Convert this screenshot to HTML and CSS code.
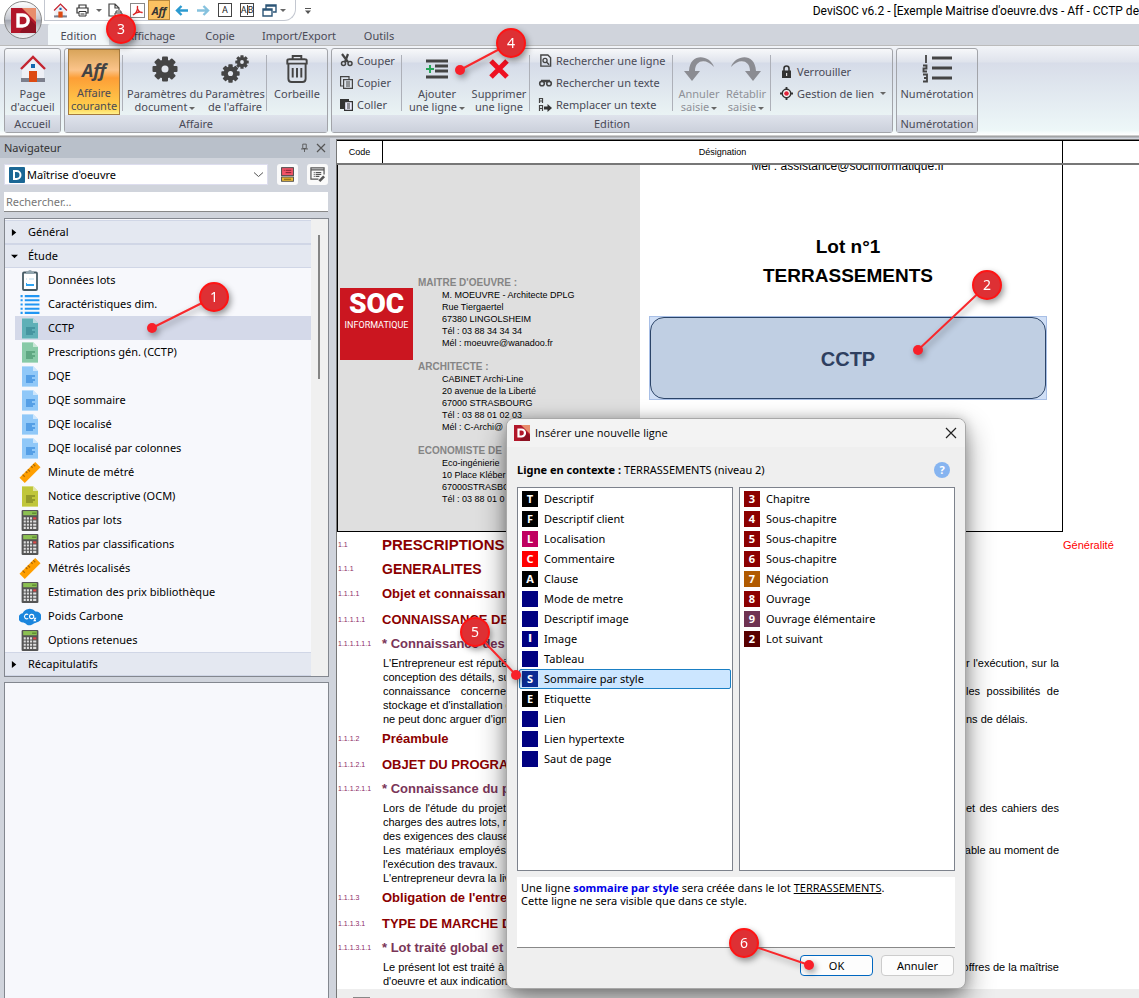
FILE: index.html
```html
<!DOCTYPE html>
<html lang="fr">
<head>
<meta charset="utf-8">
<title>DeviSOC v6.2</title>
<link rel="stylesheet" href="styles.css">
</head>
<body>
<svg class="defs" aria-hidden="true">
  <symbol id="i-house" viewBox="0 0 26 28"><path d="M4 13 13 4l9 9v11H4z" fill="#eef0f6"/><path d="M1 23h24v4H1z" fill="#7c7f8c"/><path d="M3 13v10M23 13v10" stroke="#eef0f6" stroke-width="2"/><rect x="9" y="16" width="8" height="11" fill="#dd4a12"/><rect x="11" y="9" width="4" height="4" fill="#1467b0"/><path d="M1 14 13 2l12 12" fill="none" stroke="#c42430" stroke-width="2.400"/></symbol>
  <symbol id="i-d" viewBox="0 0 16 16"><rect width="16" height="16" fill="#b2172a"/><path d="M7 0h9v9l-4-4z" fill="#e88d6c"/><path d="M6 15 12 7l4 4v5H6z" fill="#7d0f1f" opacity=".7"/><path d="M4.500 4.500h3a3.500 3.500 0 0 1 0 7h-3z" fill="none" stroke="#fff" stroke-width="2.200"/></symbol>
  <symbol id="i-gear" viewBox="-13 -13 26 26"><g fill="#454545"><circle r="9.500"/><rect x="-3" y="-12.500" width="6" height="25" rx="1"/><rect x="-3" y="-12.500" width="6" height="25" rx="1" transform="rotate(45)"/><rect x="-3" y="-12.500" width="6" height="25" rx="1" transform="rotate(90)"/><rect x="-3" y="-12.500" width="6" height="25" rx="1" transform="rotate(135)"/></g><circle r="3.500" fill="#e3e7ee"/></symbol>
  <symbol id="i-doc" viewBox="0 0 16 21"><path d="M0 0h11l5 5v16H0z" fill="currentColor"/><path d="M11 0v5h5z" fill="#fff" opacity=".55"/><path d="M0 0h11v1H0zM0 20h16v1H0z" fill="#fff" opacity=".35"/><path class="doc-mark" d="M4 9h9v2h-3v2h3v2h-2v2H4z"/></symbol>
  <symbol id="i-calc" viewBox="0 0 16 20"><rect width="16" height="20" rx="1" fill="#555"/><rect x="1.500" y="1" width="13" height="4" fill="#8cc152"/><path d="M10 3h4" stroke="#4d7a24"/><g fill="#ddd"><path d="M2 7h2v2H2zM5 7h2v2H5zM8 7h2v2H8zM2 10h2v2H2zM5 10h2v2H5zM8 10h2v2H8zM11 10h3v2h-3zM2 13h2v2H2zM5 13h2v2H5zM8 13h2v2H8zM11 13h3v2h-3zM2 16h2v2H2zM5 16h2v2H5zM8 16h2v2H8zM11 16h3v2h-3z"/></g><path d="M11 7h3v2h-3z" fill="#e04848"/></symbol>
  <symbol id="i-ruler" viewBox="0 0 20 20"><path d="M0 15 15 0l5 5L5 20z" fill="#ff9f00"/><path d="m3 12 2 2M6 9l1.500 1.500M8 7l2 2M11 4l1.500 1.500M13 2l2 2" stroke="#b06a00" stroke-width="1.200"/></symbol>
  <symbol id="i-list" viewBox="0 0 18 20"><path d="M4 2h14M4 6h14M4 10h14M4 14h14M4 18h14M0 2h2M0 6h2M0 10h2M0 14h2M0 18h2" stroke="#2196f3" stroke-width="2"/></symbol>
  <symbol id="i-clip" viewBox="0 0 16 21"><rect x="1" y="2.500" width="14" height="17.500" rx="1" fill="#fff" stroke="#455a64" stroke-width="1.800"/><path d="M4 2h2a2 2 0 0 1 4 0h2v2H4z" fill="#90a4ae"/><path d="M4 9h1M7 9h5" stroke="#b6d7e8"/><path d="M4 14h1M4 15h8" stroke="#2fa4f2" stroke-width="2"/></symbol>
  <symbol id="i-cloud" viewBox="0 0 24 19"><path d="M5 16a5 5 0 0 1-1-10A8 7 0 0 1 18 4a6 6 0 0 1 1 12c-4 1-4 3-8 3-3 0-3-2-6-3z" fill="#1b86dd"/><g fill="none" stroke="#fff" stroke-width="1.200"><path d="M10 7.500a2.500 2.500 0 1 0 0 4"/><circle cx="13.800" cy="9.500" r="2.300"/><path d="M16.500 11.500h1.500l-1.500 2.500h2"/></g></symbol>
  <symbol id="i-print" viewBox="0 0 13 13"><path d="M3 4V1h7v3M3 9H1V4h11v5h-2" fill="none" stroke="#333" stroke-width="1.200"/><path d="M3 7.500h7V12H3zM4.500 10h4" fill="#fff" stroke="#333"/></symbol>
</svg>

<div class="app">
  <header class="titlebar">
    <div class="quick">
      <button class="q" aria-label="Accueil"><svg class="s15"><use href="#i-house"/></svg></button>
      <button class="q" aria-label="Imprimer"><svg class="s13"><use href="#i-print"/></svg></button>
      <i class="tri narrow"></i>
      <button class="q" aria-label="Aperçu"><svg class="s15" viewBox="0 0 15 15"><path d="M6 13H1V1h6l4 4v2M7 1v4h4" fill="none" stroke="#444" stroke-width="1.200"/><path d="M8 10V8h5v2M8 13H7v-3h7v3" fill="#fff" stroke="#444"/></svg></button>
      <button class="q" aria-label="PDF"><svg class="s15" viewBox="0 0 15 15"><rect x=".5" y=".5" width="14" height="14" fill="#fff" stroke="#888"/><path d="M3 12c3-1 5-5 4.500-9-1 3 2 7 5 6.500-3-1-7 0-9.500 2.500" fill="none" stroke="#d22" stroke-width="1.300"/></svg></button>
      <button class="q aff-small">Aff</button>
      <button class="q" aria-label="Précédent"><svg class="s13" viewBox="0 0 13 11"><path d="M13 5.500H2M6.500 1 2 5.500 6.500 10" fill="none" stroke="#2b9ad0" stroke-width="2.400"/></svg></button>
      <button class="q" aria-label="Suivant"><svg class="s13" viewBox="0 0 13 11"><path d="M0 5.500h11M6.500 1 11 5.500 6.500 10" fill="none" stroke="#86c2de" stroke-width="2.400"/></svg></button>
      <button class="q boxed">A</button>
      <button class="q boxed split"><span>A</span><span>B</span></button>
      <button class="q" aria-label="Fenêtres"><svg class="s15" viewBox="0 0 15 13"><path d="M4 5V1h10v7h-3M4 2h10" fill="none" stroke="#2c5577" stroke-width="1.400"/><path d="M1 5h9v7H1zM1 6h9" fill="#fff" stroke="#2c5577" stroke-width="1.400"/></svg></button>
      <i class="tri last"></i>
    </div>
    <svg class="more" viewBox="0 0 6 6"><path d="M0 .5h6" stroke="#555"/><path d="M0 2.500h6L3 6z" fill="#555"/></svg>
    <h1 class="title">DeviSOC v6.2 - [Exemple Maitrise d'oeuvre.dvs - Aff - CCTP de</h1>
    <div class="orb"><svg class="orb-icon"><use href="#i-d"/></svg></div>
  </header>

  <nav class="tabs">
    <button class="tab active">Edition</button><button class="tab t2">Affichage</button><button class="tab t3">Copie</button><button class="tab t4">Import/Export</button><button class="tab t5">Outils</button>
  </nav>

  <div class="ribbon">
    <section class="group g1">
      <div class="body"><button class="big w55"><svg class="ico i26"><use href="#i-house"/></svg><span>Page<br>d'accueil</span></button></div>
      <h2>Accueil</h2>
    </section>
    <section class="group g2">
      <div class="body">
        <button class="big current"><b class="aff">Aff</b><span>Affaire<br>courante</span></button>
        <i class="sep"></i>
        <button class="big w82"><svg class="ico i26"><use href="#i-gear"/></svg><span>Paramètres du<br>document<i class="tri"></i></span></button>
        <button class="big w58"><svg class="ico i30" viewBox="0 0 28 28"><use href="#i-gear" x="0" y="9" width="19" height="19"/><use href="#i-gear" x="14" y="0" width="14" height="14"/></svg><span>Paramètres<br>de l'affaire</span></button>
        <i class="sep"></i>
        <button class="big w58"><svg class="ico i26" viewBox="0 0 24 26"><g fill="none" stroke="#444" stroke-width="1.800"><path d="M8 4V1h8v3M3 8V5q0-1 2-1h14q2 0 2 1v3zM4 8v14q0 3 3 3h10q3 0 3-3V8"/><path d="M8 12v9M12 12v9M16 12v9"/></g></svg><span>Corbeille</span></button>
      </div>
      <h2>Affaire</h2>
    </section>
    <section class="group g3">
      <div class="body">
        <div class="stack w67">
          <button class="small"><svg class="s13" viewBox="0 0 13 13"><path d="M2 0 8 8M8 0 5 8" stroke="#444" stroke-width="2.200"/><circle cx="3.500" cy="9.500" r="2" fill="none" stroke="#444" stroke-width="1.500"/><circle cx="10" cy="9.500" r="2" fill="none" stroke="#444" stroke-width="1.500"/></svg>Couper</button>
          <button class="small"><svg class="s13" viewBox="0 0 13 13"><path d="M3 10H.6V.6H9V3" fill="none" stroke="#444" stroke-width="1.200"/><path d="M3.600 3.600h8.800v8.800H3.600zM6 6h4M6 8h4M6 10h4" fill="none" stroke="#444" stroke-width="1.200"/></svg>Copier</button>
          <button class="small"><svg class="s13" viewBox="0 0 13 13"><path d="M0 1h9v3H4v7H0z" fill="#333"/><path d="M4.600 3.600h7.800v8.800H4.600zM7 6h3M7 8h3M7 10h3" fill="#eef" stroke="#333" stroke-width="1.200"/></svg>Coller</button>
        </div>
        <i class="sep"></i>
        <button class="big w68"><svg class="ico i22" viewBox="0 0 22 20"><path d="M0 2h22M9 7h13M9 12h13M0 18h22" stroke="#444" stroke-width="3"/><path d="M0 10h8M4 6v8" stroke="#27a55a" stroke-width="2"/></svg><span>Ajouter<br>une ligne<i class="tri"></i></span></button>
        <button class="big w56"><svg class="ico i20" viewBox="0 0 20 20"><path d="m2 2 16 16M18 2 2 18" stroke="#ee1122" stroke-width="5"/></svg><span>Supprimer<br>une ligne</span></button>
        <i class="sep"></i>
        <div class="stack w139">
          <button class="small"><svg class="s13" viewBox="0 0 13 14"><path d="M1.500 1H9l3 3v9H1.500z" fill="none" stroke="#444" stroke-width="1.500"/><circle cx="6" cy="7" r="2.200" fill="none" stroke="#444" stroke-width="1.400"/><path d="m7.500 8.500 3 3" stroke="#444" stroke-width="1.500"/></svg>Rechercher une ligne</button>
          <button class="small"><svg class="s13" viewBox="0 0 13 9"><circle cx="3" cy="5.500" r="2.300" fill="none" stroke="#444" stroke-width="1.600"/><circle cx="10" cy="5.500" r="2.300" fill="none" stroke="#444" stroke-width="1.600"/><path d="M2 3h9" stroke="#444" stroke-width="2.500"/></svg>Rechercher un texte</button>
          <button class="small"><svg class="s13" viewBox="0 0 13 13"><path d="M.5 5V.5h3V5M.5 3h3M.5 13V7.500h3V13M.5 10.500h3" fill="none" stroke="#444" stroke-width="1.200"/><path d="M5 10h4" stroke="#333" stroke-width="3"/><path d="M8.500 6v8l4.500-4z" fill="#333"/></svg>Remplacer un texte</button>
        </div>
        <i class="sep"></i>
        <button class="big off w50"><svg class="ico i30" viewBox="0 0 30 26"><path d="M30 11C26-1 6-4 5 15H0l8 10 8-10h-5C11 4 22 2 30 11z" fill="#8b8c92"/></svg><span>Annuler<br>saisie<i class="tri"></i></span></button>
        <button class="big off w44"><svg class="ico i30" viewBox="0 0 30 26"><path d="M0 11C4-1 24-4 25 15h5l-8 10-8-10h5C19 4 8 2 0 11z" fill="#8b8c92"/></svg><span>Rétablir<br>saisie<i class="tri"></i></span></button>
        <i class="sep"></i>
        <div class="stack two">
          <button class="small"><svg class="s13" viewBox="0 0 13 13"><path d="M4 6V3.500a2.500 2.500 0 0 1 5 0V6" fill="none" stroke="#333" stroke-width="1.600"/><rect x="2" y="5.500" width="9" height="7.500" fill="#333"/><rect x="6" y="8" width="1.200" height="3" fill="#ddd"/></svg>Verrouiller</button>
          <button class="small"><svg class="s13" viewBox="0 0 14 14"><circle cx="7" cy="7" r="4.500" fill="#fff" stroke="#333" stroke-width="1.600"/><path d="M7 0v3M7 11v3M0 7h3M11 7h3" stroke="#333" stroke-width="2"/><circle cx="7" cy="7" r="2.500" fill="#e0243a"/></svg>Gestion de lien <i class="tri"></i></button>
        </div>
      </div>
      <h2>Edition</h2>
    </section>
    <section class="group g4">
      <div class="body"><button class="big w80"><svg class="ico i30" viewBox="0 0 30 28"><path d="M10 3h20M10 13h20M10 23h20" stroke="#444" stroke-width="3"/><path d="M4 0v8M1 10.500h3.500v3H1.500v3H5M1 19.500h4v7H1M2 23h3" fill="none" stroke="#444" stroke-width="1.800"/></svg><span>Numérotation</span></button></div>
      <h2>Numérotation</h2>
    </section>
  </div>

  <main class="work">
    <aside class="side">
      <div class="side-head"><span>Navigateur</span><svg class="pin" viewBox="0 0 8 10"><path d="M2 0h4v5H2zM0 5.500h8M4 5.500V9" fill="none" stroke="#555"/></svg><svg class="cross" viewBox="0 0 8 8"><path d="m0 0 8 8M8 0 0 8" stroke="#555" stroke-width="1.200"/></svg></div>
      <div class="pick">
        <div class="combo"><svg class="s16" viewBox="0 0 16 16"><rect width="16" height="16" rx="1" fill="#1b6795"/><path d="M5 4h2.500a4 4 0 0 1 0 8H5z" fill="none" stroke="#fff" stroke-width="2"/></svg><select aria-label="Profil"><option>Maîtrise d'oeuvre</option></select><svg class="chev" viewBox="0 0 9 5"><path d="M0 .5 4.500 4.500 9 .5" fill="none" stroke="#555"/></svg></div>
        <button class="sq" aria-label="Vue"><svg class="s15" viewBox="0 0 14 16"><rect x=".7" y=".7" width="12.600" height="8.500" fill="#f25468" stroke="#444"/><path d="M3 3.500h1M5 3.500h6M5 6h6" stroke="#7d2030"/><rect x=".7" y="10.700" width="12.600" height="4.500" fill="#f8c436" stroke="#444"/><path d="M3 13h8" stroke="#665010"/></svg></button>
        <button class="sq" aria-label="Modifier"><svg class="s15" viewBox="0 0 16 16"><path d="M15 8V1H1v12h8M1 3h14M4 6h1M6 6h6M4 8h1M6 8h6M4 10h1M6 10h4" fill="none" stroke="#555" stroke-width="1.300"/><path d="m9 14 5-5 2 2-5 5z" fill="#555"/></svg></button>
      </div>
      <input class="search" type="text" placeholder="Rechercher..." aria-label="Rechercher">
      <div class="tree">
        <div class="tree-main">
          <button class="node"><svg class="arr" viewBox="0 0 8 8"><path d="M1 0 6 4 1 8z"/></svg>Général</button>
          <button class="node"><svg class="arr" viewBox="0 0 8 8"><path d="M0 2h8L4 6z"/></svg>Étude</button>
          <ul>
            <li><svg class="ic"><use href="#i-clip"/></svg>Données lots</li>
            <li><svg class="ic"><use href="#i-list"/></svg>Caractéristiques dim.</li>
            <li class="sel"><svg class="ic teal"><use href="#i-doc"/></svg>CCTP</li>
            <li><svg class="ic green"><use href="#i-doc"/></svg>Prescriptions gén. (CCTP)</li>
            <li><svg class="ic blue"><use href="#i-doc"/></svg>DQE</li>
            <li><svg class="ic blue"><use href="#i-doc"/></svg>DQE sommaire</li>
            <li><svg class="ic blue"><use href="#i-doc"/></svg>DQE localisé</li>
            <li><svg class="ic blue"><use href="#i-doc"/></svg>DQE localisé par colonnes</li>
            <li><svg class="ic"><use href="#i-ruler"/></svg>Minute de métré</li>
            <li><svg class="ic olive"><use href="#i-doc"/></svg>Notice descriptive (OCM)</li>
            <li><svg class="ic"><use href="#i-calc"/></svg>Ratios par lots</li>
            <li><svg class="ic"><use href="#i-calc"/></svg>Ratios par classifications</li>
            <li><svg class="ic"><use href="#i-ruler"/></svg>Métrés localisés</li>
            <li><svg class="ic"><use href="#i-calc"/></svg>Estimation des prix bibliothèque</li>
            <li><svg class="ic wide"><use href="#i-cloud"/></svg>Poids Carbone</li>
            <li><svg class="ic"><use href="#i-calc"/></svg>Options retenues</li>
          </ul>
          <button class="node"><svg class="arr" viewBox="0 0 8 8"><path d="M1 0 6 4 1 8z"/></svg>Récapitulatifs</button>
        </div>
        <div class="track"><i></i></div>
      </div>
      <div class="blank"></div>
    </aside>

    <section class="doc">
      <div class="doc-head"><span>Code</span><span>Désignation</span></div>
      <div class="cover">
        <div class="cover-left">
          <div class="soc"><b>SOC</b><span>INFORMATIQUE</span></div>
          <div class="contacts">
            <h3>MAITRE D'OEUVRE :</h3>
            <p>M. MOEUVRE - Architecte DPLG<br>Rue Tiergaertel<br>67380 LINGOLSHEIM<br>Tél : 03 88 34 34 34<br>Mél : moeuvre@wanadoo.fr</p>
            <h3>ARCHITECTE :</h3>
            <p>CABINET Archi-Line<br>20 avenue de la Liberté<br>67000 STRASBOURG<br>Tél : 03 88 01 02 03<br>Mél : C-Archi@</p>
            <h3>ECONOMISTE DE</h3>
            <p>Eco-ingénierie<br>10 Place Kléber<br>67000STRASBO<br>Tél : 03 88 01 0</p>
          </div>
        </div>
        <div class="cover-right">
          <div class="mail"><span>Mél : assistance@socinformatique.fr</span></div>
          <p class="lot">Lot n°1<br>TERRASSEMENTS</p>
          <div class="cctp"><div>CCTP</div></div>
        </div>
      </div>
      <div class="rows">
        <div class="r h1"><i>1.1</i><b>PRESCRIPTIONS</b><em>Généralité</em></div>
        <div class="r h2"><i>1.1.1</i><b>GENERALITES</b></div>
        <div class="r h3"><i>1.1.1.1</i><b>Objet et connaissanc</b></div>
        <div class="r h3"><i>1.1.1.1.1</i><b>CONNAISSANCE DES</b></div>
        <div class="r h4"><i>1.1.1.1.1.1</i><b>* Connaissance des</b></div>
        <div class="para">
          <p><span>L'Entrepreneur est réputé</span><span>r l'exécution, sur la</span></p>
          <p><span class="nat">conception des détails, su</span></p>
          <p><span>connaissance concerne</span><span>les possibilités de</span></p>
          <p><span class="nat">stockage et d'installation c</span></p>
          <p><span class="nat">ne peut donc arguer d'ign</span><span class="nat">ns de délais.</span></p>
        </div>
        <div class="r h3"><i>1.1.1.2</i><b>Préambule</b></div>
        <div class="r h3"><i>1.1.1.2.1</i><b>OBJET DU PROGRAM</b></div>
        <div class="r h4"><i>1.1.1.2.1.1</i><b>* Connaissance du p</b></div>
        <div class="para">
          <p><span>Lors de l'étude du projet</span><span>et des cahiers des</span></p>
          <p><span class="nat">charges des autres lots, n</span></p>
          <p><span class="nat">des exigences des clause</span></p>
          <p><span>Les matériaux employés</span><span>cable au moment de</span></p>
          <p><span class="nat">l'exécution des travaux.</span></p>
          <p><span class="nat">L'entrepreneur devra la liv</span></p>
        </div>
        <div class="r h3"><i>1.1.1.3</i><b>Obligation de l'entre</b></div>
        <div class="r h3"><i>1.1.1.3.1</i><b>TYPE DE MARCHE DE</b></div>
        <div class="r h4"><i>1.1.1.3.1.1</i><b>* Lot traité global et</b></div>
        <div class="para">
          <p><span class="nat">Le présent lot est traité à</span><span>offres de la maîtrise</span></p>
          <p><span class="nat">d'oeuvre et aux indications</span></p>
        </div>
      </div>
      <div class="doc-foot"><i></i></div>
    </section>
  </main>
</div>

<div class="dialog" role="dialog" aria-labelledby="dlg-title">
  <header><svg class="s16"><use href="#i-d"/></svg><h2 id="dlg-title">Insérer une nouvelle ligne</h2><button aria-label="Fermer"><svg class="x" viewBox="0 0 10 10"><path d="m0 0 10 10M10 0 0 10" stroke="#222" stroke-width="1.200"/></svg></button></header>
  <div class="ctx"><p><b>Ligne en contexte :</b> TERRASSEMENTS (niveau 2)</p><button class="help">?</button></div>
  <div class="lists">
    <ul>
      <li><b class="k">T</b>Descriptif</li>
      <li><b class="k">F</b>Descriptif client</li>
      <li><b class="k pink">L</b>Localisation</li>
      <li><b class="k red">C</b>Commentaire</li>
      <li><b class="k">A</b>Clause</li>
      <li><b class="k navy"></b>Mode de metre</li>
      <li><b class="k navy"></b>Descriptif image</li>
      <li><b class="k navy serif">I</b>Image</li>
      <li><b class="k navy"></b>Tableau</li>
      <li class="on"><b class="k royal">S</b>Sommaire par style</li>
      <li><b class="k">E</b>Etiquette</li>
      <li><b class="k navy"></b>Lien</li>
      <li><b class="k navy"></b>Lien hypertexte</li>
      <li><b class="k navy"></b>Saut de page</li>
    </ul>
    <ul>
      <li><b class="k dark">3</b>Chapitre</li>
      <li><b class="k dark">4</b>Sous-chapitre</li>
      <li><b class="k dark">5</b>Sous-chapitre</li>
      <li><b class="k dark">6</b>Sous-chapitre</li>
      <li><b class="k amber">7</b>Négociation</li>
      <li><b class="k dark">8</b>Ouvrage</li>
      <li><b class="k plum">9</b>Ouvrage élémentaire</li>
      <li><b class="k maroon">2</b>Lot suivant</li>
    </ul>
  </div>
  <div class="info">Une ligne <b>sommaire par style</b> sera créée dans le lot <u>TERRASSEMENTS</u>.<br>Cette ligne ne sera visible que dans ce style.</div>
  <footer><button class="primary">OK</button><button>Annuler</button></footer>
</div>

<svg class="marks" viewBox="0 0 1139 998">
  <g class="lines"><path d="M214 297 152 328M987 285l-69 65M511 43l-51 27M475 632l41 43M744 943l65 22"/></g>
  <g class="dots"><circle cx="152" cy="328" r="5"/><circle cx="918" cy="350" r="5"/><circle cx="460" cy="70" r="5"/><circle cx="516" cy="675" r="5"/><circle cx="809" cy="965" r="5"/></g>
  <g class="balls"><circle cx="214" cy="297" r="14"/><circle cx="987" cy="285" r="14"/><circle cx="121" cy="29" r="14"/><circle cx="511" cy="43" r="14"/><circle cx="475" cy="632" r="14"/><circle cx="744" cy="943" r="14"/></g>
  <g class="nums"><text x="214" y="302">1</text><text x="987" y="290">2</text><text x="121" y="34">3</text><text x="511" y="48">4</text><text x="475" y="637">5</text><text x="744" y="948">6</text></g>
</svg>
</body>
</html>
```
FILE: styles.css
```css
* { box-sizing: border-box; }
body { margin: 0; overflow: hidden; font: 12px/16px "Noto Sans", "Open Sans", sans-serif; color: #000; background: #fff; }
h1, h2, h3, p, ul { margin: 0; padding: 0; font-size: inherit; font-weight: normal; list-style: none; }
button, input, select { font: inherit; color: inherit; border: 0; padding: 0; margin: 0; background: none; }
svg { display: block; flex: none; overflow: visible; }
.defs { position: absolute; width: 0; height: 0; }
.s13 { width: 13px; height: 13px; }
.s15 { width: 15px; height: 15px; }
.s16 { width: 16px; height: 16px; }
.app { display: flex; flex-direction: column; height: 100vh; }

/* title bar */
.titlebar { position: relative; display: flex; height: 24px; align-items: flex-start; background: #fff; }
.quick { display: flex; align-items: center; height: 21px; margin-left: 44px; padding: 0 9px 0 4px; border: 1px solid #c3c7d0; border-top: 0; border-radius: 0 0 12px 0; }
.quick .q { display: flex; align-items: center; justify-content: center; width: 22px; height: 20px; flex: none; }
.tri { display: inline-block; border: 3px solid transparent; border-top-color: #666; border-bottom: 0; margin-left: 2px; vertical-align: middle; }
.tri.narrow { margin: 0 2px 0 3px; }
.tri.last { margin: 0; }
.quick .aff-small { background: #fbc262; border: 1px solid #bb8a3e; font: italic bold 11px "Open Sans", sans-serif; color: #333; }
.quick .boxed { width: 14px; height: 14px; margin: 0 4px; border: 1px solid #444; font: 9px "Roboto", sans-serif; color: #222; }
.split span + span { border-left: 1px solid #444; }
.more { width: 6px; height: 6px; margin: 8px 0 0 9px; }
.title { flex: 1; white-space: nowrap; overflow: hidden; text-align: right; padding-top: 3px; font-family: "Roboto", sans-serif; }
.orb { position: absolute; left: 4px; top: 1px; z-index: 2; display: flex; align-items: center; justify-content: center; width: 38px; height: 38px; border-radius: 50%; border: 1px solid #888; background: linear-gradient(#fff, #c5c8d0 48%, #a2a6b0 50%, #f4f4f6); }
.orb-icon { width: 25px; height: 25px; }

/* tabs */
.tabs { display: flex; height: 22px; padding-left: 48px; background: #d0d4dc; border-bottom: 1px solid #bbb; font-size: 11px; color: #4a4a56; }
.tab { height: 21px; padding-top: 2px; text-align: center; }
.tab.active { width: 61px; background: #f3f8fa; border-radius: 2px 2px 0 0; }
.t2 { width: 84px; }
.t3 { width: 54px; }
.t4 { width: 104px; }
.t5 { width: 56px; }

/* ribbon */
.ribbon { display: flex; gap: 3px; height: 92px; padding: 2px 4px; background: linear-gradient(#f2f4f8, #dfe3ec 16px, #d8dde9 17px, #edf7f8 84px, #fff 89px, #999 90px, #c0c4cc); font-size: 11px; line-height: 13px; color: #4a4a56; }
.group { display: flex; flex-direction: column; height: 85px; border: 1px solid #a2a4a9; border-radius: 3px; background: linear-gradient(#f7f8fa, #dfe3ec 13px, #d5dbe8 14px, #eaf3f4 66px); }
.group h2 { height: 17px; line-height: 17px; text-align: center; background: linear-gradient(#dfe3ec, #cbd0db); }
.g1 { width: 57px; }
.g2 { width: 264px; }
.g3 { width: 562px; }
.g4 { width: 82px; }
.body { display: flex; flex: 1; }
.g2 .body { padding-left: 3px; }
.big { display: flex; flex-direction: column; align-items: center; height: 66px; padding: 6px 0 1px; white-space: nowrap; flex: none; }
.big > span { margin-top: auto; height: 27px; }
.ico { height: 28px; }
.i20 { width: 20px; }
.i22 { width: 22px; }
.i26 { width: 26px; }
.i30 { width: 30px; }
.w44 { width: 44px; }
.w50 { width: 50px; }
.w55 { width: 55px; }
.w56 { width: 56px; }
.w58 { width: 58px; }
.w67 { width: 67px; }
.w68 { width: 68px; }
.w80 { width: 80px; }
.w82 { width: 82px; }
.w139 { width: 139px; }
.current { width: 52px; border: 1px solid #a57a3f; background: linear-gradient(#d9a55b, #fbc48a 20px, #fd9e36 28px, #ffd04e 58px, #fff08a); }
.aff { font: italic bold 18px/28px "Open Sans", sans-serif; color: #444; }
.sep { width: 1px; height: 56px; margin: 6px 1px 0 2px; background: #adb0b8; flex: none; }
.stack { display: flex; flex-direction: column; flex: none; padding-left: 8px; }
.small { display: flex; align-items: center; gap: 4px; height: 22px; white-space: nowrap; }
.stack.two { padding-top: 11px; width: 118px; }
.off { color: #8f9198; }

/* navigator */
.work { display: flex; flex: 1; min-height: 0; background: #d0d4dc; }
.side { display: flex; flex-direction: column; width: 330px; flex: none; }
.side-head { display: flex; align-items: center; height: 20px; padding: 0 5px 0 4px; background: #b9c0ca; font-size: 11px; color: #333; }
.side-head span { flex: 1; }
.pin { width: 7px; height: 9px; margin-right: 9px; }
.cross { width: 8px; height: 8px; }
.pick { display: flex; gap: 9px; padding: 6px 2px 0 4px; }
.combo { display: flex; align-items: center; flex: 1; height: 21px; padding: 0 4px; background: #fff; border: 1px solid #dde; }
.combo select { flex: 1; appearance: none; padding-left: 2px; font-size: 11px; }
.chev { width: 9px; height: 5px; }
.sq { display: flex; align-items: center; justify-content: center; width: 21px; height: 21px; background: #fafafa; border-radius: 3px; }
.search { height: 20px; margin: 7px 2px 0 4px; padding: 0 2px; background: #fff; border-bottom: 1px solid #888; font-size: 11px; }
.search::placeholder { color: #777; }
.tree { display: flex; height: 459px; margin: 6px 1px 0 4px; border: 1px solid #83878f; background: #f7f8fc; font-size: 11px; }
.tree-main { flex: 1; padding-top: 1px; }
.node { display: flex; align-items: center; width: 100%; height: 24px; padding-left: 6px; background: #e4e8f1; border-top: 1px solid #d0d6e6; border-bottom: 1px solid #d0d6e6; }
.arr { width: 7px; height: 7px; margin-right: 10px; }
.tree li { display: flex; align-items: center; height: 24px; margin-left: 10px; padding-left: 4px; }
.tree li.sel { background: #d4d9e9; }
.ic { width: 22px; height: 21px; margin-right: 7px; }
.doc-mark { fill: var(--mark); }
.teal { color: #5fb0b7; --mark: #4595a0; }
.green { color: #88caa7; --mark: #5fa882; }
.blue { color: #90c8f8; --mark: #559fe6; }
.olive { color: #c0c63a; --mark: #949a2a; }
.track { width: 17px; padding: 16px 7px; background: #f0f0f0; }
.track i { display: block; width: 2px; height: 144px; background: #858585; }
.blank { flex: 1; margin: 5px 1px 0 4px; border: 1px solid #83878f; border-bottom: 0; background: #f7f8fc; }

/* document */
.doc { display: flex; flex-direction: column; flex: 1; min-width: 0; margin: 1px 0 0 6px; background: #fff; border: solid #777; border-width: 1px 0 0 1px; font: 11px/14px "Liberation Sans", Arial, sans-serif; }
.doc-head { display: flex; height: 25px; border-top: 1px solid #000; border-bottom: 2px solid #777; font-size: 9px; line-height: 22px; text-align: center; }
.doc-head span { width: 46px; border-right: 1px solid #000; }
.doc-head span + span { width: 680px; }
.cover { display: flex; width: 726px; height: 367px; border: 1px solid #000; border-top: 0; }
.cover-left { display: flex; gap: 5px; width: 302px; padding-left: 2px; background: #dfdfdf; }
.soc { width: 73px; height: 72px; margin-top: 123px; overflow: hidden; background: #cb1620; color: #fff; text-align: center; }
.soc b { display: block; height: 32px; font: 900 28px/32px "Roboto", sans-serif; }
.soc span { display: block; font: 9px/10px "Roboto", sans-serif; }
.contacts { padding-top: 112px; white-space: nowrap; }
.contacts h3 { font: bold 10px/12px "Liberation Sans", sans-serif; color: #858585; }
.contacts p { margin: 0 0 12px 24px; font-size: 9px; line-height: 12px; }
.cover-right { flex: 1; text-align: center; padding: 0 15px 0 9px; }
.mail { display: flex; align-items: flex-end; justify-content: center; height: 8px; overflow: hidden; font-size: 12px; line-height: 14px; }
.lot { margin-top: 59px; font-weight: bold; font-size: 19px; line-height: 29px; }
.cctp { margin-top: 26px; background: #d0dff6; border: 1px solid #a8bfe6; }
.cctp div { height: 82px; border: 1px solid #2b4468; border-radius: 14px; background: #c0cfe3; font-weight: bold; font-size: 20px; line-height: 82px; color: #2e3f60; }
.rows { flex: 1; min-height: 0; padding: 1px 0 0 1px; overflow: hidden; white-space: nowrap; }
.r { display: grid; grid-template-columns: 44px 681px 1fr; align-items: center; height: 26px; color: #8b0000; }
.r i { font: 7px/12px "Liberation Sans", sans-serif; color: #8b2a66; }
.r em { font-style: normal; color: #f00; }
.h1, .h2 { height: 24px; }
.h1 b { font-size: 15px; }
.h2 b { font-size: 14px; }
.h3 b { font-size: 13px; }
.h4 { height: 21px; }
.h4 b { font-size: 13px; color: #7a3558; }
.para { width: 721px; padding: 2px 0 0 45px; }
.para p { display: flex; justify-content: space-between; }
.para span { width: 123px; text-align-last: justify; }
.para span + span { width: auto; min-width: 93px; }
.para .nat, .para span + .nat { text-align-last: left; }
.doc-foot { height: 9px; padding: 8px 16px 0; background: #eee; }
.doc-foot i { display: block; width: 17px; height: 1px; background: #888; }

/* dialog */
.dialog { position: absolute; left: 506px; top: 418px; width: 460px; display: flex; flex-direction: column; border: 1px solid #a8a8a8; border-radius: 8px; background: #efefef; box-shadow: 0 12px 28px #0007, 0 0 12px #0003; overflow: hidden; font-size: 11px; }
.dialog header { display: flex; align-items: center; gap: 5px; height: 28px; padding: 0 9px 0 7px; background: #f3f3f3; font-size: 12px; }
.dialog header h2 { flex: 1; font-family: "Open Sans", sans-serif; font-size: 11px; }
.x { width: 10px; height: 10px; }
.ctx { display: flex; align-items: center; justify-content: space-between; height: 40px; padding: 6px 15px 0 10px; }
.help { width: 16px; height: 16px; border-radius: 50%; background: #86b4f0; color: #fff; font-weight: bold; line-height: 16px; }
.lists { display: grid; grid-template-columns: 1fr 1fr; gap: 6px; height: 384px; padding: 0 10px; }
.lists ul { padding: 1px; background: #fff; border: 1px solid #7d828c; }
.lists li { display: flex; align-items: center; gap: 6px; height: 20px; padding-left: 2px; border: 1px solid transparent; }
.lists .on { background: #cce6ff; border-color: #1a7fc4; border-radius: 2px; }
.k { width: 16px; height: 16px; background: #000; color: #fff; text-align: center; font: bold 11px/16px "Noto Sans", sans-serif; }
.pink { background: #c00060; }
.red { background: #f00; }
.navy { background: #000080; }
.serif { font-family: "DejaVu Sans", sans-serif; }
.royal { background: #0b2a93; }
.dark { background: #8b0000; }
.amber { background: #b05a00; }
.plum { background: #6f3352; }
.maroon { background: #580000; }
.info { height: 71px; margin: 6px 10px 0; padding: 4px; background: #fff; border-bottom: 1px solid #888; line-height: 13px; font-size: 11px; }
.info b { color: #0000e8; }
.dialog footer { display: flex; justify-content: flex-end; gap: 8px; padding: 7px 11px 12px; }
.dialog footer button { width: 73px; height: 21px; background: #fdfdfd; border: 1px solid #ccc; border-radius: 4px; }
.dialog footer .primary { border-color: #0067c0; }

/* callouts */
.marks { position: absolute; left: 0; top: 0; width: 1139px; height: 998px; pointer-events: none; filter: drop-shadow(2px 3px 3px #0006); }
.lines { stroke: #f8282c; stroke-width: 2; }
.dots { fill: #f8202a; }
.balls { fill: #de3034; stroke: #ff1414; stroke-width: 2; }
.nums { fill: #fff; font: 14px "Noto Sans", sans-serif; text-anchor: middle; }
```
